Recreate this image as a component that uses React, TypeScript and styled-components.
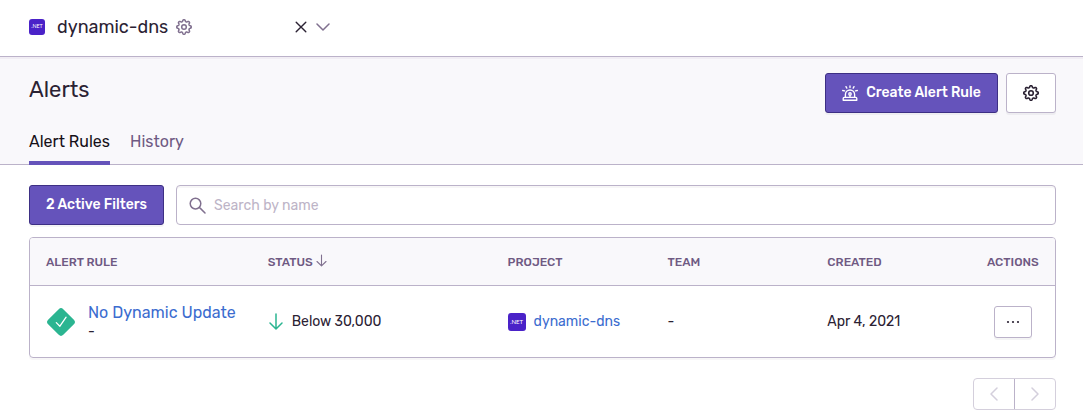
import React from "react";
import styled, { createGlobalStyle } from "styled-components";

const c = {
  text: "#2b2233",
  sub: "#6f5a83",
  icon: "#80708f",
  border: "#bbb2c9",
  line: "#d4cfdc",
  purple: "#6553bb",
  purpleDark: "#3d2f84",
  link: "#3b6ccf",
  panel: "#f9f8fb",
  green: "#2bb591",
  net: "#4a22c8",
};

const Global = createGlobalStyle`
  * { box-sizing: border-box; }
  body { margin: 0; background: #fff; color: ${c.text}; font-family: Rubik, Roboto, "Liberation Sans", sans-serif; font-size: 14px; }
  button { font: inherit; }
  svg { display: block; flex: none; }
`;

const Page = styled.div`
  height: 416px;
  overflow: hidden;
`;

const Label = styled.span`
  white-space: nowrap;
`;

const TopBar = styled.header`
  height: 57px;
  display: flex;
  align-items: center;
  padding: 0 29px 2px;
  border-bottom: 1px solid ${c.border};
`;

const ProjectName = styled.div`
  display: flex;
  align-items: center;
  width: 266px;
  font-size: 18px;
  gap: 8px;
  line-height: 24px;
`;

const ProjectTitle = styled(Label)`
  margin-left: 4px;
`;

const Platform = styled.span<{ $size: number }>`
  display: flex;
  flex: none;
  align-items: center;
  justify-content: center;
  width: ${(p) => p.$size}px;
  height: ${(p) => p.$size}px;
  border-radius: 3px;
  background: ${c.net};
  color: #fff;
  font-family: Lato, sans-serif;
  font-size: ${(p) => p.$size / 3}px;
  line-height: 1;
`;

const Controls = styled.div`
  display: flex;
  align-items: center;
  gap: 9px;
`;

const Head = styled.section`
  height: 108px;
  padding: 16px 27px 0 29px;
  background: ${c.panel};
  border-bottom: 1px solid ${c.border};
  box-shadow: inset 0 2px 0 #f1edf4;
  display: flex;
  flex-direction: column;
  justify-content: space-between;
`;

const HeadRow = styled.div`
  display: flex;
  justify-content: space-between;
`;

const Title = styled.h1`
  margin: 3px 0 0;
  font-size: 22px;
  line-height: 28px;
  font-weight: 400;
`;

const Buttons = styled.div`
  display: flex;
  gap: 8px;
`;

const Button = styled.button<{ $primary?: boolean; $w: number; $h?: number }>`
  display: flex;
  align-items: center;
  justify-content: center;
  gap: 8px;
  width: ${(p) => p.$w}px;
  height: ${(p) => p.$h ?? 40}px;
  flex: none;
  padding: 0;
  border: 1px solid ${(p) => (p.$primary ? c.purpleDark : c.border)};
  border-radius: 3px;
  background: ${(p) => (p.$primary ? c.purple : "#fff")};
  color: ${(p) => (p.$primary ? "#fff" : c.text)};
  font-weight: 500;
  font-size: 14px;
  box-shadow: 0 2px 0 rgba(43, 34, 51, 0.05);
`;

const ButtonLabel = styled(Label)`
  padding-bottom: 2px;
`;

const Tabs = styled.nav`
  display: flex;
  gap: 20px;
  font-size: 16px;
  margin-bottom: -1px;
`;

const Tab = styled.a<{ $active?: boolean; $w: number }>`
  width: ${(p) => p.$w}px;
  height: 34px;
  line-height: 22px;
  color: ${(p) => (p.$active ? "#161018" : c.sub)};
  border-bottom: 4px solid ${(p) => (p.$active ? c.purple : "transparent")};
`;

const Main = styled.main`
  padding: 20px 27px 0 29px;
`;

const Filters = styled.div`
  display: flex;
  gap: 12px;
  margin-bottom: 12px;
`;

const Search = styled.div`
  flex: 1;
  height: 40px;
  display: flex;
  align-items: center;
  gap: 8px;
  padding-left: 12px;
  border: 1px solid ${c.border};
  border-radius: 4px;
  box-shadow: inset 0 2px 0 rgba(43, 34, 51, 0.04);
  color: #bdb4c7;
`;

const Table = styled.div`
  border: 1px solid ${c.border};
  border-radius: 4px;
  overflow: hidden;
  box-shadow: 0 2px 0 rgba(43, 34, 51, 0.04);
`;

const Row = styled.div<{ $header?: boolean }>`
  display: grid;
  grid-template-columns: 221.7px 239.9px 159.9px 159.9px 159.6px 84px;
  align-items: center;
  height: ${(p) => (p.$header ? 48 : 71)}px;
  ${(p) =>
    p.$header &&
    `background: ${c.panel}; border-bottom: 1px solid ${c.border}; color: ${c.sub}; font-size: 12px; font-weight: 500;`}
`;

const Cell = styled.div<{ $gap?: number }>`
  display: flex;
  align-items: center;
  gap: ${(p) => p.$gap ?? 0}px;
  padding-left: 16px;
`;

const ActionCell = styled(Cell)`
  padding-left: 23px;
`;

const RuleName = styled.div`
  display: flex;
  flex-direction: column;
  line-height: 17px;
`;

const Link = styled.a`
  color: ${c.link};
`;

const RuleLink = styled(Link)`
  font-size: 16px;
  line-height: 20px;
`;

const Pager = styled.div`
  display: flex;
  width: 83px;
  height: 32px;
  margin: 20px 0 0 auto;
  border: 1px solid ${c.line};
  border-radius: 4px;
`;

const PageButton = styled.div<{ $divider?: boolean }>`
  flex: ${(p) => (p.$divider ? "0 0 41px" : "1")};
  display: flex;
  align-items: center;
  justify-content: center;
  ${(p) => p.$divider && `border-right: 1px solid ${c.border};`}
`;

const gearPath = (() => {
  const pts: string[] = [];
  for (let i = 0; i < 160; i++) {
    const t = (i / 160) * Math.PI * 2;
    const k = Math.tanh(1.6 * Math.cos(8 * t)) / Math.tanh(1.6);
    const r = 6.4 + 0.85 * k;
    pts.push(`${(8 + r * Math.cos(t)).toFixed(2)} ${(8 + r * Math.sin(t)).toFixed(2)}`);
  }
  return `M${pts.join("L")}Z`;
})();

const Gear = ({ color, width = 1.5 }: { color: string; width?: number }) => (
  <svg width="16" height="16" viewBox="0 0 16 16" fill="none" stroke={color} strokeWidth={width} strokeLinejoin="round">
    <path d={gearPath} />
    <circle cx="8" cy="8" r="2.3" />
  </svg>
);

const Siren = () => (
  <svg width="16" height="16" viewBox="0 0 16 16" fill="none" stroke="#fff" strokeWidth="1.35" strokeLinecap="round" strokeLinejoin="round">
    <path d="M1.2 15.2V13.4Q1.2 12.4 2.2 12.4H13.8Q14.8 12.4 14.8 13.4V15.2Z" />
    <path d="M3.4 12.3V9.6a4.6 4.6 0 0 1 9.2 0V12.3" />
    <circle cx="8" cy="8.9" r="1.2" />
    <path d="M8 10.2V12M8 .8V2.5M4 1.6l.8 1.5M12 1.6l-.8 1.5M.7 5.5l1.9.4M15.3 5.5l-1.9.4" />
  </svg>
);

const Stroke = ({ d, w, h, color, sw = 1.5 }: { d: string; w: number; h: number; color: string; sw?: number }) => (
  <svg width={w} height={h} viewBox={`0 0 ${w} ${h}`} fill="none" stroke={color} strokeWidth={sw} strokeLinecap="round" strokeLinejoin="round">
    <path d={d} />
  </svg>
);

const Resolved = () => (
  <svg width="30" height="30" viewBox="0 0 30 30">
    <rect x="4.3" y="4.3" width="21.4" height="21.4" rx="3.2" fill={c.green} transform="rotate(45 15 15)" />
    <path d="M10.3 15.6l3.6 3.6 6.2-9" fill="none" stroke="#fff" strokeWidth="1.3" strokeLinecap="round" strokeLinejoin="round" />
  </svg>
);

export default function App() {
  return (
    <Page>
      <Global />
      <TopBar>
        <ProjectName>
          <Platform $size={16}>.NET</Platform>
          <ProjectTitle>dynamic-dns</ProjectTitle>
          <Gear color={c.icon} />
        </ProjectName>
        <Controls>
          <Stroke w={12} h={12} color={c.text} sw={1.4} d="M1.2 1.2L10.8 10.8M10.8 1.2L1.2 10.8" />
          <Stroke w={14} h={8} color={c.icon} d="M1 1L7 7L13 1" />
        </Controls>
      </TopBar>
      <Head>
        <HeadRow>
          <Title>Alerts</Title>
          <Buttons>
            <Button $primary $w={173}>
              <Siren />
              <ButtonLabel>Create Alert Rule</ButtonLabel>
            </Button>
            <Button $w={50} aria-label="Settings">
              <Gear color={c.text} width={1.6} />
            </Button>
          </Buttons>
        </HeadRow>
        <Tabs>
          <Tab $active $w={81}><Label>Alert Rules</Label></Tab>
          <Tab $w={54}><Label>History</Label></Tab>
        </Tabs>
      </Head>
      <Main>
        <Filters>
          <Button $primary $w={135}><ButtonLabel>2 Active Filters</ButtonLabel></Button>
          <Search>
            <Stroke w={17} h={17} color={c.icon} d="M11.8 6.6A5.3 5.3 0 1 1 1.2 6.6A5.3 5.3 0 1 1 11.8 6.6M10.4 10.4L16 16" />
            <Label>Search by name</Label>
          </Search>
        </Filters>
        <Table>
          <Row $header>
            <Cell><Label>ALERT RULE</Label></Cell>
            <Cell $gap={3}>
              <Label>STATUS</Label>
              <Stroke w={11} h={15} color={c.icon} sw={1.1} d="M5.5 1V11.5M1 7.5L5.5 11.8L10 7.5" />
            </Cell>
            <Cell><Label>PROJECT</Label></Cell>
            <Cell><Label>TEAM</Label></Cell>
            <Cell><Label>CREATED</Label></Cell>
            <Cell><Label>ACTIONS</Label></Cell>
          </Row>
          <Row>
            <Cell $gap={12}>
              <Resolved />
              <RuleName>
                <RuleLink><Label>No Dynamic Update</Label></RuleLink>
                <Label>-</Label>
              </RuleName>
            </Cell>
            <Cell $gap={8}>
              <Stroke w={16} h={17} color={c.green} d="M8 1V15.5M2 10L8 16L14 10" />
              <Label>Below 30,000</Label>
            </Cell>
            <Cell $gap={8}>
              <Platform $size={18}>.NET</Platform>
              <Link><Label>dynamic-dns</Label></Link>
            </Cell>
            <Cell>-</Cell>
            <Cell><Label>Apr 4, 2021</Label></Cell>
            <ActionCell>
              <Button $w={38} $h={32} aria-label="More actions">
                <svg width="14" height="4" viewBox="0 0 14 4" fill={c.text}>
                  <circle cx="2" cy="2" r="1.1" />
                  <circle cx="7" cy="2" r="1.1" />
                  <circle cx="12" cy="2" r="1.1" />
                </svg>
              </Button>
            </ActionCell>
          </Row>
        </Table>
        <Pager>
          <PageButton $divider><Stroke w={8} h={14} color={c.line} d="M7 1L1 7L7 13" /></PageButton>
          <PageButton><Stroke w={8} h={14} color={c.line} d="M1 1L7 7L1 13" /></PageButton>
        </Pager>
      </Main>
    </Page>
  );
}
